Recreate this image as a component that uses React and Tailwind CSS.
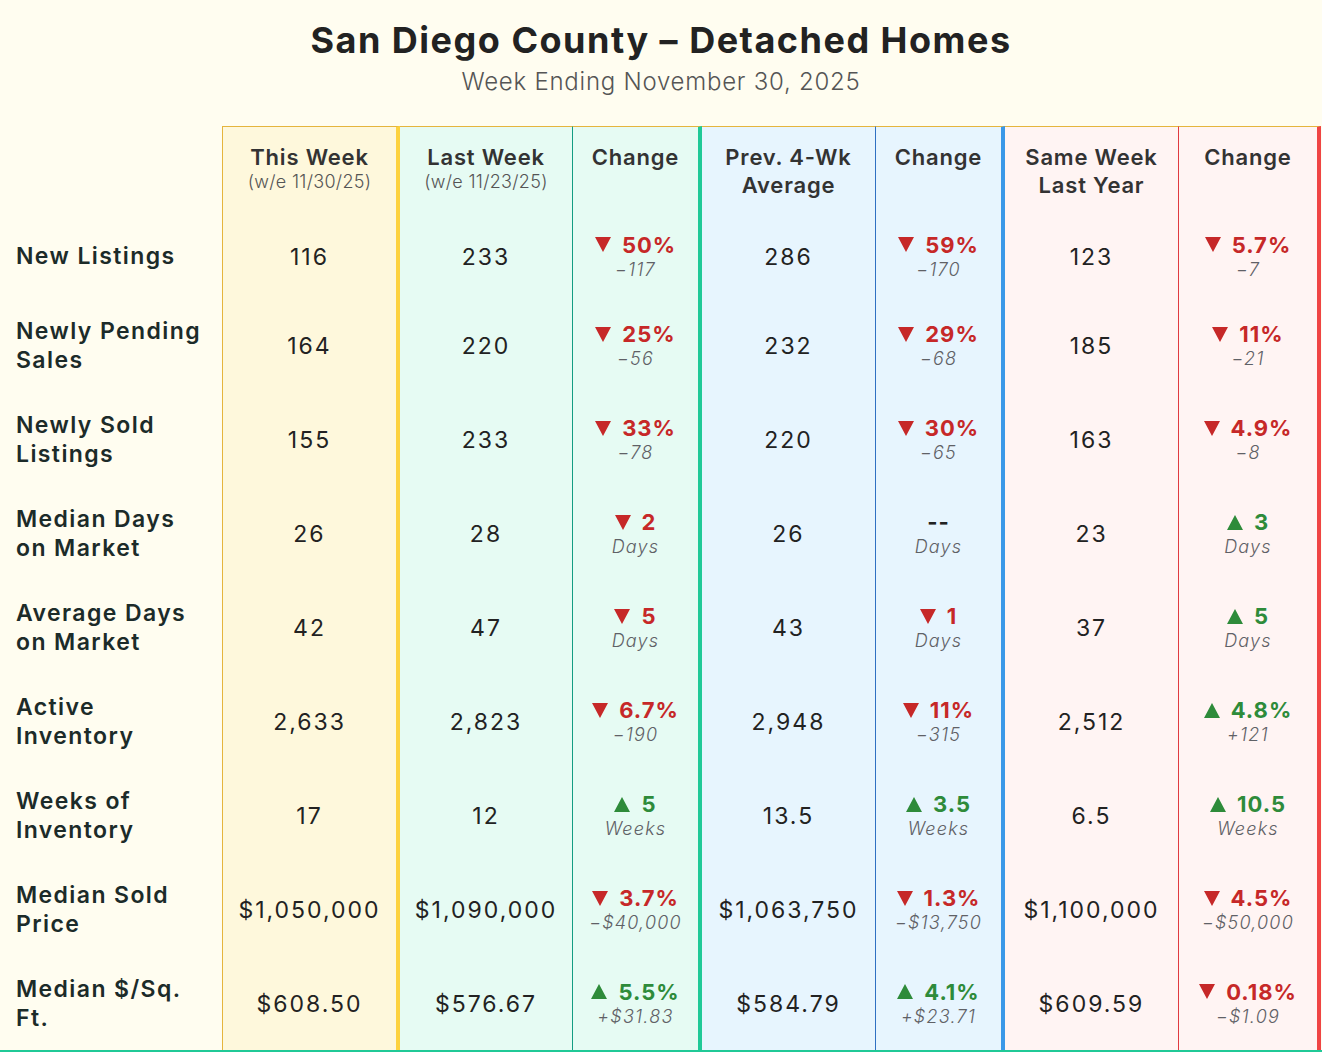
import React from "react";

// --- Column styles (bg + borders) for the 7 data columns ---
const colCls = [
  "bg-[#fef8dc] border-l border-l-[#e5b53d] border-r-4 border-r-[#fdd23e]",
  "bg-[#e6fbf3] border-r border-r-[#149c82]",
  "bg-[#e6fbf3] border-r-4 border-r-[#20c997]",
  "bg-[#e7f5fe] border-r border-r-[#2f70c2]",
  "bg-[#e7f5fe] border-r-4 border-r-[#3a98e8]",
  "bg-[#fff4f3] border-r border-r-[#e03a40]",
  "bg-[#fff4f3] border-r-4 border-r-[#ef4444]",
];

const headers = [
  { lines: ["This Week"], sub: "(w/e 11/30/25)" },
  { lines: ["Last Week"], sub: "(w/e 11/23/25)" },
  { lines: ["Change"] },
  { lines: ["Prev. 4-Wk", "Average"] },
  { lines: ["Change"] },
  { lines: ["Same Week", "Last Year"] },
  { lines: ["Change"] },
];

const rows = [
  {
    label: ["New Listings"],
    cells: ["116", "233", ["down", "50%", "−117"], "286", ["down", "59%", "−170"], "123", ["down", "5.7%", "−7"]],
  },
  {
    label: ["Newly Pending", "Sales"],
    cells: ["164", "220", ["down", "25%", "−56"], "232", ["down", "29%", "−68"], "185", ["down", "11%", "−21"]],
  },
  {
    label: ["Newly Sold", "Listings"],
    cells: ["155", "233", ["down", "33%", "−78"], "220", ["down", "30%", "−65"], "163", ["down", "4.9%", "−8"]],
  },
  {
    label: ["Median Days", "on Market"],
    cells: ["26", "28", ["down", "2", "Days"], "26", ["flat", "--", "Days"], "23", ["up", "3", "Days"]],
  },
  {
    label: ["Average Days", "on Market"],
    cells: ["42", "47", ["down", "5", "Days"], "43", ["down", "1", "Days"], "37", ["up", "5", "Days"]],
  },
  {
    label: ["Active", "Inventory"],
    cells: ["2,633", "2,823", ["down", "6.7%", "−190"], "2,948", ["down", "11%", "−315"], "2,512", ["up", "4.8%", "+121"]],
  },
  {
    label: ["Weeks of", "Inventory"],
    cells: ["17", "12", ["up", "5", "Weeks"], "13.5", ["up", "3.5", "Weeks"], "6.5", ["up", "10.5", "Weeks"]],
  },
  {
    label: ["Median Sold", "Price"],
    cells: [
      "$1,050,000",
      "$1,090,000",
      ["down", "3.7%", "−$40,000"],
      "$1,063,750",
      ["down", "1.3%", "−$13,750"],
      "$1,100,000",
      ["down", "4.5%", "−$50,000"],
    ],
  },
  {
    label: ["Median $/Sq.", "Ft."],
    cells: ["$608.50", "$576.67", ["up", "5.5%", "+$31.83"], "$584.79", ["up", "4.1%", "+$23.71"], "$609.59", ["down", "0.18%", "−$1.09"]],
  },
];

const Tri = ({ dir }) => (
  <svg width="16" height="15" viewBox="0 0 16 15" className="mr-[11px]">
    {dir === "down" ? (
      <polygon points="0,0 16,0 8,15" fill="#c62828" />
    ) : (
      <polygon points="8,0 16,15 0,15" fill="#2e8b3a" />
    )}
  </svg>
);

const ChangeCell = ({ dir, value, sub }) => {
  const color = dir === "down" ? "text-[#c62828]" : dir === "up" ? "text-[#2e8b3a]" : "text-[#222]";
  return (
    <div className="flex flex-col items-center">
      <div className={`flex items-center h-[26px] text-[22px] leading-[26px] font-bold tracking-[1px] ${color}`}>
        {dir !== "flat" && <Tri dir={dir} />}
        <span>{value}</span>
      </div>
      <div className="h-[24px] text-[18px] leading-[24px] italic font-light tracking-[1.2px] text-[#5f6166]">{sub}</div>
    </div>
  );
};

export default function App() {
  return (
    <div className="min-h-screen w-full bg-[#fffdf0] font-['Inter','Liberation_Sans',sans-serif] text-[#222]">
      {/* --- Title --- */}
      <div className="h-[126px] pt-[18px] text-center">
        <h1 className="text-[36px] leading-[44px] font-bold tracking-[1.5px] text-[#222]">
          San Diego County – Detached Homes
        </h1>
        <p className="mt-[5px] text-[24px] leading-[30px] font-light tracking-[0.75px] text-[#555]">
          Week Ending November 30, 2025
        </p>
      </div>

      {/* --- Table --- */}
      <div className="border-b-2 border-[#20c997]">
        <div className="grid grid-cols-[222px_178px_173px_129px_174px_129px_174px_142px] grid-rows-[88px_85px_repeat(7,94px)_93px]">
          <div />
          {headers.map((h, i) => (
            <div key={i} className={`${colCls[i]} border-t border-t-[#e5b53d] pt-[16px] flex flex-col items-center text-center`}>
              {h.lines.map((l) => (
                <div key={l} className="text-[22px] leading-[28px] font-semibold tracking-[0.8px] text-[#333]">
                  {l}
                </div>
              ))}
              {h.sub && <div className="text-[18px] leading-[22px] font-light tracking-[0.3px] text-[#555]">{h.sub}</div>}
            </div>
          ))}

          {rows.map((r, ri) => (
            <React.Fragment key={ri}>
              <div className="flex flex-col justify-center pl-4">
                {r.label.map((l) => (
                  <div key={l} className="text-[23px] leading-[29px] font-semibold tracking-[1.4px] whitespace-nowrap text-[#1c2b29]">
                    {l}
                  </div>
                ))}
              </div>
              {r.cells.map((c, ci) => (
                <div key={ci} className={`${colCls[ci]} flex items-center justify-center`}>
                  {Array.isArray(c) ? (
                    <ChangeCell dir={c[0]} value={c[1]} sub={c[2]} />
                  ) : (
                    <span className="text-[23px] leading-[28px] tracking-[2px] text-[#222]">{c}</span>
                  )}
                </div>
              ))}
            </React.Fragment>
          ))}
        </div>
      </div>
    </div>
  );
}
